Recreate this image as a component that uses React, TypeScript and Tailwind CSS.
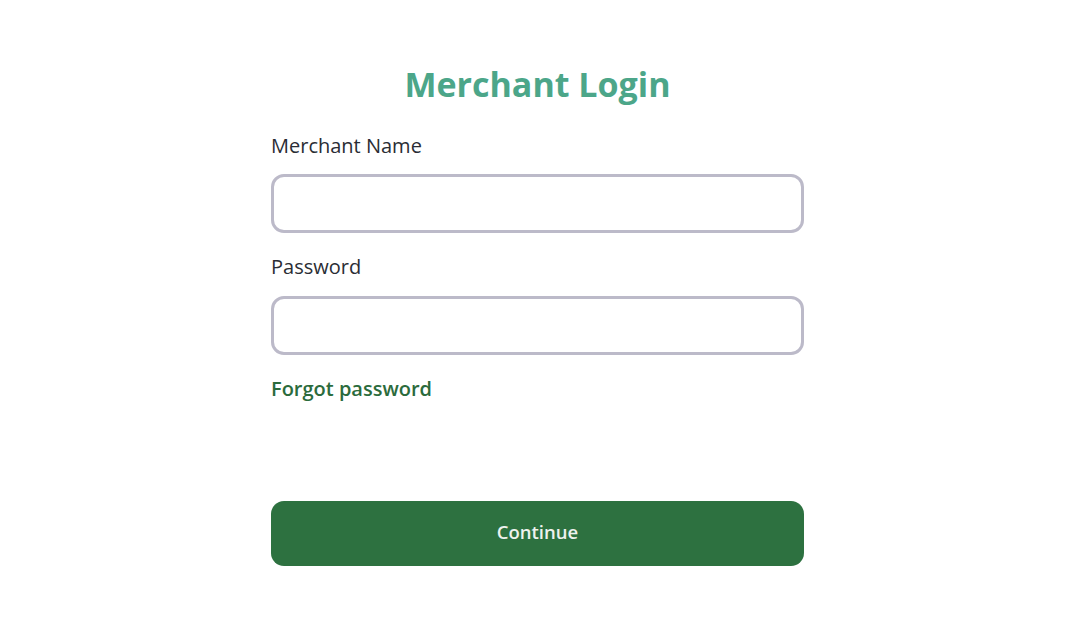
export default function App() {
  return (
    <div className="min-h-screen bg-white font-['Open_Sans','Noto_Sans',sans-serif]">
      <div className="mx-auto w-[541px] pr-[8px] pt-[62px]">
        <div className="flex flex-col">
          <h1 className="text-center text-[34px] font-bold leading-[44px] text-[#4ca689]">
            Merchant Login
          </h1>
          <label className="mt-[26px] text-[20px] leading-[28px] text-[#2a2d34]">
            Merchant Name
          </label>
          <input
            className="mt-[14px] h-[59px] w-full rounded-[13px] border-[3px] border-[#bcbac9] px-4 text-[18px] outline-none"
            type="text"
          />
          <label className="mt-[20px] text-[20px] leading-[28px] text-[#2a2d34]">
            Password
          </label>
          <input
            className="mt-[15px] h-[59px] w-full rounded-[13px] border-[3px] border-[#bcbac9] px-4 text-[18px] outline-none"
            type="password"
          />
          <a className="mt-[20px] text-[20px] font-semibold leading-[28px] text-[#2b6b3c]" href="#">
            Forgot password
          </a>
          <button className="mt-[98px] h-[65px] w-full rounded-[13px] bg-[#2d7140] pb-[4px] text-[18.5px] font-semibold leading-[26px] text-[#eef2ee]">
            Continue
          </button>
        </div>
      </div>
    </div>
  );
}
